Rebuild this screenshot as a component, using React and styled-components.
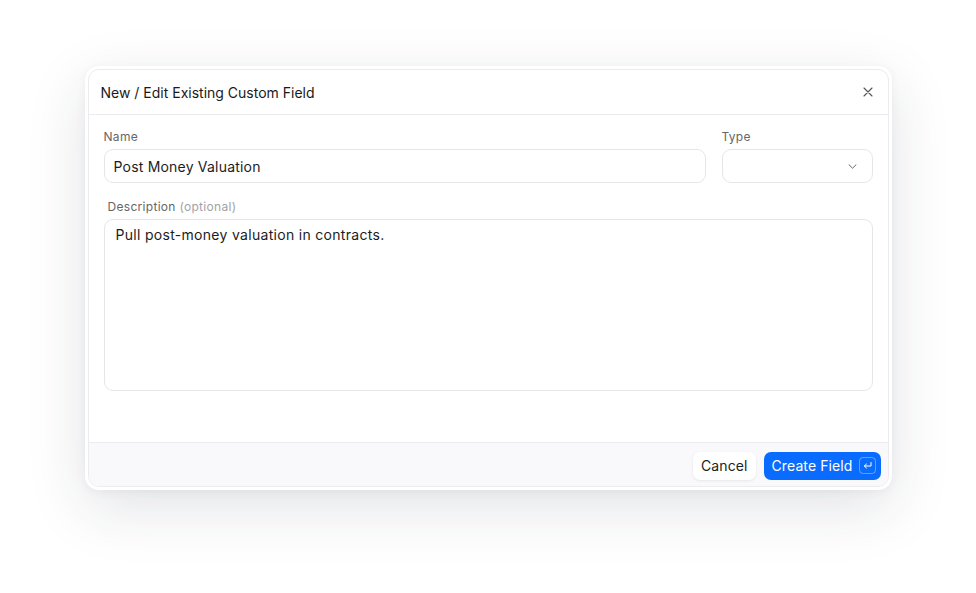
import React from "react";
import styled, { createGlobalStyle } from "styled-components";

const GlobalStyle = createGlobalStyle`
  html, body {
    margin: 0;
    padding: 0;
    background: #fff;
    font-family: Inter, "Noto Sans", sans-serif;
    color: #1c1c1e;
  }
`;

const Page = styled.div`
  display: flex;
  justify-content: center;
  padding-top: 66px;
  height: 593px;
  box-sizing: border-box;
`;

const Frame = styled.div`
  width: 807px;
  height: 424px;
  box-sizing: border-box;
  padding: 3px;
  background: #fff;
  border-radius: 14px;
  box-shadow: 0 18px 60px rgba(30, 35, 60, 0.13), 0 2px 10px rgba(30, 35, 60, 0.05);
`;

const Card = styled.div`
  height: 100%;
  box-sizing: border-box;
  border: 1px solid #ececef;
  border-radius: 11px;
  display: flex;
  flex-direction: column;
  overflow: hidden;
`;

const Header = styled.div`
  height: 44px;
  flex-shrink: 0;
  display: flex;
  align-items: center;
  justify-content: space-between;
  padding: 0 12px;
  border-bottom: 1px solid #ececef;
`;

const Title = styled.div`
  font-size: 14px;
  font-weight: 400;
  color: #1a1a1a;
`;

const CloseButton = styled.button`
  border: none;
  background: none;
  padding: 0;
  width: 16px;
  height: 16px;
  display: flex;
  align-items: center;
  justify-content: center;
  color: #555;
`;

const Body = styled.div`
  flex: 1;
  padding: 14px 15px 0 15px;
  display: flex;
  flex-direction: column;
  gap: 16px;
`;

const Row = styled.div`
  display: grid;
  grid-template-columns: 1fr 151px;
  gap: 16px;
`;

const Field = styled.div`
  display: flex;
  flex-direction: column;
  gap: 4px;
`;

const Label = styled.div`
  font-size: 12px;
  line-height: 16px;
  letter-spacing: 0.3px;
  color: #666;
  padding-left: ${(p) => p.$indent || 0}px;
`;

const Muted = styled.span`
  color: #a2a2a8;
`;

const Input = styled.div`
  height: 34px;
  box-sizing: border-box;
  border: 1px solid #e6e6ea;
  border-radius: 9px;
  padding: 0 9px;
  display: flex;
  align-items: center;
  justify-content: space-between;
  font-size: 14px;
  letter-spacing: 0.2px;
  color: #1c1c1e;
`;

const Chevron = styled.span`
  display: flex;
  margin-right: 6px;
  color: #666;
`;

const TextArea = styled.div`
  height: 172px;
  box-sizing: border-box;
  border: 1px solid #e6e6ea;
  border-radius: 9px;
  padding: 5px 11px;
  font-size: 14px;
  line-height: 20px;
  letter-spacing: 0.3px;
  color: #1c1c1e;
`;

const Footer = styled.div`
  height: 44px;
  flex-shrink: 0;
  box-sizing: border-box;
  background: #f9f9fb;
  border-top: 1px solid #ececef;
  display: flex;
  align-items: center;
  justify-content: flex-end;
  gap: 8px;
  padding: 2px 7px 0 0;
`;

const Button = styled.button`
  height: 28px;
  box-sizing: border-box;
  border: none;
  border-radius: 7px;
  display: flex;
  align-items: center;
  gap: 6px;
  font-family: inherit;
  font-size: 14px;
  letter-spacing: 0.1px;
  padding: ${(p) => (p.$primary ? "0 5px 0 8px" : "0 8px")};
  background: ${(p) => (p.$primary ? "#0a6cff" : "#fff")};
  color: ${(p) => (p.$primary ? "#fff" : "#222")};
  box-shadow: ${(p) => (p.$primary ? "none" : "0 1px 3px rgba(0,0,0,0.08)")};
`;

const KeyHint = styled.span`
  width: 17px;
  height: 17px;
  box-sizing: border-box;
  border: 1px solid rgba(255, 255, 255, 0.35);
  border-radius: 4px;
  display: flex;
  align-items: center;
  justify-content: center;
`;

export default function App() {
  return (
    <>
      <GlobalStyle />
      <Page>
        <Frame>
          <Card>
            <Header>
              <Title>New / Edit Existing Custom Field</Title>
              <CloseButton aria-label="Close">
                <svg width="10" height="10" viewBox="0 0 10 10" fill="none" stroke="currentColor" strokeWidth="1.1" strokeLinecap="round">
                  <path d="M1 1l8 8M9 1L1 9" />
                </svg>
              </CloseButton>
            </Header>
            <Body>
              <Row>
                <Field>
                  <Label>Name</Label>
                  <Input>Post Money Valuation</Input>
                </Field>
                <Field>
                  <Label>Type</Label>
                  <Input>
                    <span />
                    <Chevron>
                      <svg width="9" height="5" viewBox="0 0 9 5" fill="none" stroke="currentColor" strokeWidth="1" strokeLinecap="round" strokeLinejoin="round">
                        <path d="M1 0.8l3.5 3.4L8 0.8" />
                      </svg>
                    </Chevron>
                  </Input>
                </Field>
              </Row>
              <Field>
                <Label $indent={4}>
                  Description <Muted>(optional)</Muted>
                </Label>
                <TextArea>Pull post-money valuation in contracts.</TextArea>
              </Field>
            </Body>
            <Footer>
              <Button>Cancel</Button>
              <Button $primary>
                Create Field
                <KeyHint>
                  <svg width="9" height="8" viewBox="0 0 9 8" fill="none" stroke="#fff" strokeWidth="1" strokeLinecap="round" strokeLinejoin="round">
                    <path d="M8 0.5v3.5H1.5M3.5 2L1.3 4l2.2 2" />
                  </svg>
                </KeyHint>
              </Button>
            </Footer>
          </Card>
        </Frame>
      </Page>
    </>
  );
}
